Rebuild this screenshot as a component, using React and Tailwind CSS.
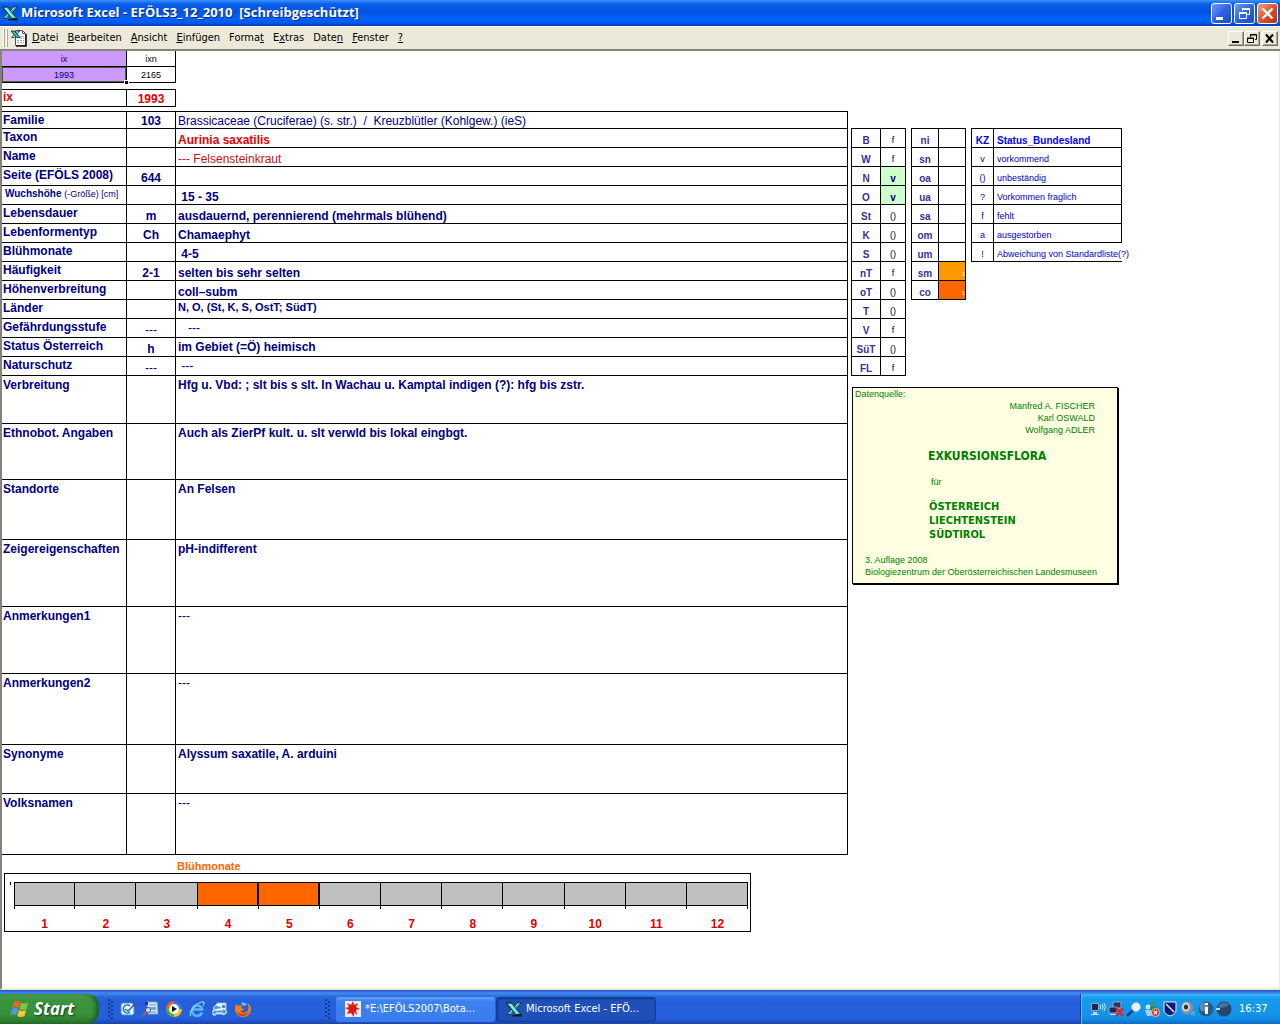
import React from "react";

const menuItems = [
  ["", "D", "atei"],
  ["", "B", "earbeiten"],
  ["", "A", "nsicht"],
  ["", "E", "infügen"],
  ["Forma", "t", ""],
  ["E", "x", "tras"],
  ["Date", "n", ""],
  ["", "F", "enster"],
  ["", "?", ""],
];

// h: row height class, cls: weight, colour and alignment of the value cell
const shortRows = [
  { label: "Familie", code: "103", value: "Brassicaceae (Cruciferae) (s. str.)  /  Kreuzblütler (Kohlgew.) (ieS)", h: "h-[17px]", cls: "font-normal align-bottom" },
  { label: "Taxon", value: "Aurinia saxatilis", cls: "font-bold text-[#e80000] align-bottom" },
  { label: "Name", value: "--- Felsensteinkraut", cls: "font-normal text-[#c81010] align-bottom" },
  { label: "Seite (EFÖLS 2008)", code: "644", value: "" },
  { label: "Wuchshöhe", unit: "(-Größe) [cm]", value: " 15 - 35" },
  { label: "Lebensdauer", code: "m", value: "ausdauernd, perennierend (mehrmals blühend)" },
  { label: "Lebenformentyp", code: "Ch", value: "Chamaephyt" },
  { label: "Blühmonate", value: " 4-5" },
  { label: "Häufigkeit", code: "2-1", value: "selten bis sehr selten" },
  { label: "Höhenverbreitung", value: "coll–subm" },
  { label: "Länder", value: "N, O, (St, K, S, OstT; SüdT)", cls: "font-bold text-[11px] align-top" },
  { label: "Gefährdungsstufe", code: "---", value: "   ---", cls: "font-normal align-middle" },
  { label: "Status Österreich", code: "h", value: "im Gebiet (=Ö) heimisch", cls: "font-bold align-middle" },
  { label: "Naturschutz", code: "---", value: " ---", cls: "font-normal align-middle" },
];

const longRows = [
  { label: "Verbreitung", value: "Hfg u. Vbd: ; slt bis s slt. In Wachau u. Kamptal indigen (?): hfg bis zstr.", h: "h-[48px]" },
  { label: "Ethnobot. Angaben", value: "Auch als ZierPf kult. u. slt verwld bis lokal eingbgt.", h: "h-[56px]" },
  { label: "Standorte", value: "An Felsen", h: "h-[60px]" },
  { label: "Zeigereigenschaften", value: "pH-indifferent", h: "h-[67px]" },
  { label: "Anmerkungen1", value: "---", h: "h-[67px]" },
  { label: "Anmerkungen2", value: "---", h: "h-[71px]" },
  { label: "Synonyme", value: "Alyssum saxatile, A. arduini", h: "h-[49px]" },
  { label: "Volksnamen", value: "---", h: "h-[61px]" },
];

const laender = [
  ["B", "f"], ["W", "f"], ["N", "v"], ["O", "v"], ["St", "()"], ["K", "()"], ["S", "()"],
  ["nT", "f"], ["oT", "()"], ["T", "()"], ["V", "f"], ["SüT", "()"], ["FL", "f"],
];

const stufen = [
  ["ni", ""], ["sn", ""], ["oa", ""], ["ua", ""], ["sa", ""], ["om", ""], ["um", ""],
  ["sm", "bg-[#ff9900]"], ["co", "bg-[#ff6600]"],
];

const legende = [
  ["v", "vorkommend"],
  ["()", "unbeständig"],
  ["?", "Vorkommen fraglich"],
  ["f", "fehlt"],
  ["a", "ausgestorben"],
  ["!", "Abweichung von Standardliste(?)"],
];

const months = [1, 2, 3, 4, 5, 6, 7, 8, 9, 10, 11, 12];

function ExcelIcon() {
  return (
    <svg width="16" height="16" viewBox="0 0 16 16" className="shrink-0">
      <path d="M11.500 2H15L5 13.500H1z" fill="#bff4f4" stroke="#062020" strokeWidth=".8" />
      <path d="M12 3.500h1.500L4.500 13H3z" fill="#1f9c9c" />
      <path d="M.5 2H6l9 11.500H9.500z" fill="#35cfcf" stroke="#062020" />
      <path d="M2.500 3h2l8 10h-1z" fill="#a8fafa" />
      <path d="M6 14h10v1.500H6z" fill="#062020" />
    </svg>
  );
}

function DocIcon() {
  return (
    <svg width="16" height="18" viewBox="0 0 16 18" className="shrink-0">
      <path d="M4.500 1.500h7l3 3v12h-10z" fill="#fff" stroke="#555" />
      <path d="M11.500 1.500v3h3" fill="none" stroke="#555" />
      <path d="M15 5v12H5" fill="none" stroke="#111" strokeWidth="1.600" />
      <path d="M9 7.500h4M9 9.500h4M6 11.500h7M6 13.500h7" stroke="#9aa2ac" strokeDasharray="2 1" />
      <path d="M6.500 2H9L3.500 8.500H.5z" fill="#9beeee" stroke="#062020" strokeWidth=".7" />
      <path d="M0 2h3.500l5.500 6.500H5.500z" fill="#2cc4c4" stroke="#062020" strokeWidth=".8" />
    </svg>
  );
}

function MinGlyph() {
  return (
    <svg width="19" height="19" viewBox="0 0 19 19">
      <path d="M4 13h7v3H4z" fill="#fff" />
    </svg>
  );
}

function RestoreGlyph() {
  return (
    <svg width="19" height="19" viewBox="0 0 19 19" fill="none" stroke="#fff">
      <path d="M7.500 7V4.500h7v6H12" />
      <path d="M7 5h8" strokeWidth="2" />
      <path d="M4.500 8.500h7v6h-7z" />
      <path d="M4 9h8" strokeWidth="2" />
    </svg>
  );
}

function CloseGlyph() {
  return (
    <svg width="19" height="19" viewBox="0 0 19 19" stroke="#fff" strokeWidth="2.400">
      <path d="M4.500 4.500l10 10M14.500 4.500l-10 10" />
    </svg>
  );
}

function TitleBar() {
  const blue =
    "flex h-[21px] w-[21px] items-center justify-center rounded-[3px] border border-white bg-gradient-to-br from-[#6f9bf5] via-[#2f63e6] to-[#1c49c9]";
  return (
    <header className="flex h-[26px] items-center bg-[linear-gradient(#3a93ff_0,#0a5ee8_4px,#0054e0_12px,#0162fb_19px,#0058ee_23px,#0038b4_26px)] pl-[2px] pr-[2px]">
      <ExcelIcon />
      <h1 className="ml-[3px] whitespace-pre font-['Open_Sans',sans-serif] text-[13px] font-bold text-white [text-shadow:1px_1px_#0a2a80]">
        {"Microsoft Excel - EFÖLS3_12_2010  [Schreibgeschützt]"}
      </h1>
      <div className="ml-auto flex gap-[2px]">
        <button aria-label="Minimieren" className={blue}><MinGlyph /></button>
        <button aria-label="Wiederherstellen" className={blue}><RestoreGlyph /></button>
        <button
          aria-label="Schließen"
          className="flex h-[21px] w-[21px] items-center justify-center rounded-[3px] border border-white bg-gradient-to-br from-[#f0a088] via-[#e0502c] to-[#b8300c]"
        >
          <CloseGlyph />
        </button>
      </div>
    </header>
  );
}

function MenuBar() {
  const small =
    "flex h-[15px] w-4 items-center justify-center border border-t-white border-l-white border-r-[#716f64] border-b-[#716f64] bg-[#ece9d8] shadow-[inset_-1px_-1px_#aca899]";
  return (
    <nav className="flex h-[25px] items-center border-b-2 border-[#86847a] border-t border-t-white bg-[#ece9d8] pr-[2px] font-['DejaVu_Sans_Condensed','DejaVu_Sans',sans-serif] text-[11px] text-black">
      <span className="ml-[3px] h-[18px] w-[2px] border-l border-white bg-[#aca899]" />
      <span className="ml-px mr-[3px] h-[18px] w-[2px] border-l border-white bg-[#aca899]" />
      <DocIcon />
      <div className="ml-[5px] flex gap-[9px]">
        {menuItems.map(([a, u, b]) => (
          <button key={a + u + b} className="leading-4">
            {a}<u>{u}</u>{b}
          </button>
        ))}
      </div>
      <div className="ml-auto flex">
        <button aria-label="Fenster minimieren" className={small}>
          <svg width="12" height="11"><path d="M2 8h7v2H2z" /></svg>
        </button>
        <button aria-label="Fenster wiederherstellen" className={small}>
          <svg width="12" height="11" fill="none" stroke="#000">
            <path d="M4.500 4V1.500h6v5H9M4 2h7" />
            <path d="M1.500 5.500h6v4h-6zM1 5h7" />
          </svg>
        </button>
        <button aria-label="Fenster schließen" className={small + " ml-[2px]"}>
          <svg width="12" height="11" stroke="#000" strokeWidth="2"><path d="M2 1.500l7 8M9 1.500l-7 8" /></svg>
        </button>
      </div>
    </nav>
  );
}

function IndexTables() {
  return (
    <>
      <table className="w-[174px] table-fixed border-separate border-spacing-0 text-center text-[9px] leading-3">
        <colgroup>
          <col className="w-[125px]" />
          <col className="w-[49px]" />
        </colgroup>
        <tbody>
          <tr className="h-4">
            <td className="border-b border-r border-black bg-[#cc99ff] p-0 text-[#000080]">ix</td>
            <td className="border-b border-r border-black p-0">ixn</td>
          </tr>
          <tr className="h-4">
            <td className="relative border-b border-r border-black bg-[#cc99ff] p-0 text-[#000080] shadow-[inset_0_0_0_1px_#4a5a3a]">
              1993
              <span className="absolute -bottom-[3px] -right-[3px] h-[5px] w-[5px] border border-white bg-black" />
            </td>
            <td className="border-b border-r border-black p-0">2165</td>
          </tr>
        </tbody>
      </table>
      <table className="mt-[6px] w-[174px] table-fixed border-separate border-spacing-0 border-t border-black text-[12px] font-bold leading-[14px] text-[#e80000]">
        <colgroup>
          <col className="w-[125px]" />
          <col className="w-[49px]" />
        </colgroup>
        <tbody>
          <tr className="h-[17px]">
            <td className="border-b border-r border-black p-0 pl-px align-top">ix</td>
            <td className="border-b border-r border-black p-0 text-center align-bottom">1993</td>
          </tr>
        </tbody>
      </table>
    </>
  );
}

function TaxonTable() {
  return (
    <table className="mt-1 w-[846px] table-fixed border-separate border-spacing-0 whitespace-pre border-t border-black text-[12px] leading-[14px] text-[#000080]">
      <colgroup>
        <col className="w-[125px]" />
        <col className="w-[49px]" />
        <col />
      </colgroup>
      <tbody>
        {shortRows.map((r) => (
          <tr key={r.label} className={r.h || "h-[19px]"}>
            {r.unit ? (
              <th className="border-b border-r border-black p-0 pl-[3px] pt-px text-left align-top text-[10px] font-bold">
                {r.label} <span className="text-[9px] font-normal">{r.unit}</span>
              </th>
            ) : (
              <th className="border-b border-r border-black p-0 pl-px pt-px text-left align-top font-bold">{r.label}</th>
            )}
            <td className={"border-b border-r border-black p-0 text-center align-bottom " + (r.code === "---" ? "font-normal" : "font-bold")}>
              {r.code}
            </td>
            <td className={"border-b border-r border-black p-0 pl-[2px] " + (r.cls || "font-bold align-bottom")}>{r.value}</td>
          </tr>
        ))}
        {longRows.map((r) => (
          <tr key={r.label} className={r.h}>
            <th className="border-b border-r border-black p-0 pl-px pt-[2px] text-left align-top font-bold">{r.label}</th>
            <td className="border-b border-r border-black p-0" />
            <td className={"border-b border-r border-black p-0 pl-[2px] pt-[2px] align-top " + (r.value === "---" ? "font-normal" : "font-bold")}>
              {r.value}
            </td>
          </tr>
        ))}
      </tbody>
    </table>
  );
}

function BloomChart() {
  return (
    <section className="w-[749px]">
      <h2 className="ml-[175px] mt-1 text-[11px] font-bold leading-[14px] text-[#ff6600]">Blühmonate</h2>
      <div className="ml-[2px] flex h-[59px] border border-black pl-[5px] pr-[2px] pt-[8px]">
        <span className="h-[3px] w-px bg-black" />
        <div className="ml-[3px] flex grow">
          {months.map((m) => (
            <div key={m} className="group flex-1 text-center text-[12px] font-bold leading-[14px] text-[#e00000]">
              <div
                className={
                  "h-6 border-b border-t border-black group-first:border-l " +
                  (m === 4 || m === 5 ? "border-r-2 bg-[#ff6600]" : "border-r bg-[#c0c0c0]")
                }
              />
              <div className="mb-2 h-[3px] border-r border-black group-first:border-l" />
              {m}
            </div>
          ))}
        </div>
      </div>
    </section>
  );
}

function SideTables() {
  return (
    <div className="flex items-start gap-[5px] text-[9px] leading-[13px]">
      <table className="w-[55px] table-fixed border-separate border-spacing-0 border-l border-t border-black text-center">
        <colgroup>
          <col className="w-[29px]" />
          <col className="w-[25px]" />
        </colgroup>
        <tbody>
          {laender.map(([k, s]) => (
            <tr key={k} className="h-[19px]">
              <th className="border-b border-r border-black p-0 align-bottom text-[10px] font-bold text-[#333399]">{k}</th>
              <td
                className={
                  "border-b border-r border-black p-0 align-bottom " +
                  (s === "v" ? "bg-[#ccffcc] text-[10px] font-bold text-[#000080]" : "")
                }
              >
                {s}
              </td>
            </tr>
          ))}
        </tbody>
      </table>
      <table className="w-[55px] table-fixed border-separate border-spacing-0 border-l border-t border-black text-center">
        <colgroup>
          <col className="w-[27px]" />
          <col className="w-[27px]" />
        </colgroup>
        <tbody>
          {stufen.map(([k, bg]) => (
            <tr key={k} className="h-[19px]">
              <th className="border-b border-r border-black p-0 align-bottom text-[10px] font-bold text-[#333399]">{k}</th>
              <td className={"border-b border-r border-black p-0 text-right align-bottom text-[6px] leading-[11px] text-white " + bg}>
                {bg ? "1" : ""}
              </td>
            </tr>
          ))}
        </tbody>
      </table>
      <table className="w-[151px] table-fixed border-separate border-spacing-0 whitespace-nowrap border-l border-t border-black text-left text-[#0000c8]">
        <colgroup>
          <col className="w-[22px]" />
          <col className="w-[128px]" />
        </colgroup>
        <thead>
          <tr className="h-[19px] text-[10px] text-[#0000ff]">
            <th className="border-b border-r border-black p-0 text-center align-bottom">KZ</th>
            <th className="border-b border-r border-black p-0 pl-[3px] align-bottom">Status_Bundesland</th>
          </tr>
        </thead>
        <tbody>
          {legende.map(([k, t]) => (
            <tr key={k} className="h-[19px]">
              <td className="border-b border-r border-black p-0 text-center align-bottom">{k}</td>
              <td className={"border-b border-black p-0 pl-[3px] align-bottom " + (k === "!" ? "" : "border-r")}>{t}</td>
            </tr>
          ))}
        </tbody>
      </table>
    </div>
  );
}

function SourceBox() {
  return (
    <aside className="ml-px mt-[11px] h-[197px] w-[266px] border border-black bg-[#ffffe1] text-[9px] leading-3 text-[#008000] shadow-[1px_1px_#000]">
      <p className="pl-[2px]">Datenquelle:</p>
      <div className="pr-[22px] text-right">
        <p>Manfred A. FISCHER</p>
        <p>Karl OSWALD</p>
        <p>Wolfgang ADLER</p>
      </div>
      <div className="pl-[75px] font-['DejaVu_Sans_Condensed','DejaVu_Sans',sans-serif] font-bold">
        <p className="mt-3 text-[12px] leading-4">EXKURSIONSFLORA</p>
        <p className="my-3 pl-[3px] font-['Liberation_Sans',sans-serif] font-normal">für</p>
        <p className="pl-px text-[11px] leading-[14px]">ÖSTERREICH</p>
        <p className="pl-px text-[11px] leading-[14px]">LIECHTENSTEIN</p>
        <p className="pl-px text-[11px] leading-[14px]">SÜDTIROL</p>
      </div>
      <div className="mt-3 whitespace-nowrap pl-3">
        <p>3. Auflage 2008</p>
        <p>Biologiezentrum der Oberösterreichischen Landesmuseen</p>
      </div>
    </aside>
  );
}

function Grip() {
  return (
    <svg width="6" height="20" viewBox="0 0 6 20" fill="#123a9c" className="shrink-0">
      {[0, 4, 8, 12, 16].map((y) => (
        <g key={y}>
          <rect x="0" y={y} width="2" height="2" />
          <rect x="3" y={y + 2} width="2" height="2" />
        </g>
      ))}
    </svg>
  );
}

function QuickLaunch() {
  return (
    <div className="flex gap-[7px]">
      <a href="#desktop" aria-label="Desktop anzeigen">
        <svg width="16" height="16">
          <rect x="1" y="2" width="13" height="12" rx="2" fill="#e8f4ff" stroke="#3f8fd8" />
          <path d="M10 5a4 4 0 1 0 0 6M5 8l3 2 6-6" fill="none" stroke="#1f6fc0" strokeWidth="1.500" />
          <path d="M13 3l2 2" stroke="#b03020" strokeWidth="2" />
        </svg>
      </a>
      <a href="#suche" aria-label="Suche">
        <svg width="16" height="16">
          <path d="M4 1h10l1 12H5z" fill="#dcebf8" stroke="#7fa6cc" />
          <path d="M6 4h7M6 11h7" stroke="#88a" />
          <path d="M6 6h7v3H6z" fill="#6aa8e8" />
          <circle cx="5" cy="9" r="2.500" fill="#cfe8ff" stroke="#556" />
          <path d="M3 11l-3 4" stroke="#c0603a" strokeWidth="2" />
          <path d="M2 1h3v3H2z" fill="#1a2fa8" />
        </svg>
      </a>
      <a href="#player" aria-label="Media Player">
        <svg width="16" height="16">
          <path d="M8 8V0A8 8 0 0 0 0 8z" fill="#e8622a" />
          <path d="M8 8h8A8 8 0 0 0 8 0z" fill="#2f78d8" />
          <path d="M8 8H0a8 8 0 0 0 8 8z" fill="#4caf3c" />
          <path d="M8 8v8a8 8 0 0 0 8-8z" fill="#f3c423" />
          <circle cx="8" cy="8" r="5" fill="#f8f8f8" />
          <path d="M6 5l5 3-5 3z" fill="#111" />
        </svg>
      </a>
      <a href="#ie" aria-label="Internet Explorer">
        <svg width="16" height="16" fill="none">
          <path d="M13 11.500A5.200 5.200 0 1 1 13.200 8.500H4" stroke="#56b8f5" strokeWidth="2.600" />
          <path d="M2 15C-1 13 5 3 13 1c3-.5 2 2 1 4" stroke="#8fd4ff" strokeWidth="1.200" />
        </svg>
      </a>
      <a href="#mail" aria-label="Outlook Express">
        <svg width="16" height="16">
          <path d="M5 2h9v11H5z" fill="#f2f6fc" stroke="#9db4d4" />
          <path d="M10 4h3v3h-3z" fill="#4a86d8" />
          <path d="M1 7l4-4v2h4v3H5v2zM15 11l-4-4v2H1v5h3v-2h7v2z" fill="#3f98e6" stroke="#e6f3ff" />
        </svg>
      </a>
      <a href="#firefox" aria-label="Firefox">
        <svg width="17" height="16">
          <circle cx="8" cy="8" r="6" fill="#2a5fc0" />
          <path d="M6 2c3-1 5 0 6 2L8 5z" fill="#7fb4ee" />
          <path d="M1 3l2 2c1-1 3-1 4 0L6 7l3 1c-1 2-3 2-4 2 2 3 7 2 8-1s0-5-1-7c4 2 5 6 3 10s-7 5-11 3S-1 7 1 3z" fill="#f08019" />
          <path d="M2 10c3 4 9 4 12 0-1 4-4 5.500-7 5S2 13 2 10z" fill="#d0401a" />
        </svg>
      </a>
    </div>
  );
}

function TrayIcons() {
  return (
    <div className="flex gap-[2px]">
      <svg width="16" height="16">
        <path d="M1.500 2.500h7v7h-7z" fill="#1c2550" stroke="#8fa4c0" />
        <path d="M3 11h4v2H3zM1 13h8v1H1z" fill="#cdd6e0" />
        <path d="M10 4q1.500 2 0 4M12 3q2.500 3 0 6M14 2q3 4 0 8" fill="none" stroke="#cfe6ff" />
      </svg>
      <svg width="16" height="16">
        <path d="M5 1h8v6H5z" fill="#26306a" stroke="#9ab" />
        <path d="M1 6h8v6H1z" fill="#1c2550" stroke="#9ab" />
        <path d="M2 13h7v1H2z" fill="#cdd6e0" />
        <path d="M8 7l7 8M15 7l-7 8" stroke="#e0252c" strokeWidth="2.500" />
      </svg>
      <svg width="16" height="16">
        <path d="M7 9l-6 6" stroke="#223a78" strokeWidth="2.500" />
        <circle cx="10" cy="6" r="4.500" fill="#e6f5ff" stroke="#8fbce6" />
      </svg>
      <svg width="16" height="16">
        <circle cx="9" cy="3" r="2.500" fill="#3d9a5a" />
        <circle cx="4" cy="6" r="2.500" fill="#bfe6ec" />
        <path d="M6 6h6l2 4-4 4H6z" fill="#2a7f50" />
        <path d="M1 9h6l2 4-2 2H3z" fill="#9fd2dc" />
        <circle cx="11.500" cy="11.500" r="4" fill="#d8321c" stroke="#fff" strokeWidth=".6" />
        <path d="M10 10l3 3M13 10l-3 3" stroke="#fff" strokeWidth="1.300" />
      </svg>
      <svg width="16" height="16">
        <path d="M2 1h12v8c0 3-3 5-6 6-3-1-6-3-6-6z" fill="#0c1c78" stroke="#e8ecf8" />
        <path d="M4 3l8 8" stroke="#e8ecf8" strokeWidth="1.500" />
      </svg>
      <svg width="16" height="16">
        <ellipse cx="7" cy="7" rx="6" ry="6.500" fill="#8c9096" />
        <ellipse cx="6" cy="6" rx="4" ry="4.500" fill="#d4d7da" />
        <ellipse cx="6" cy="6" rx="2.200" ry="2.500" fill="#303438" />
        <path d="M11 14l3-4M13 15l2-3" stroke="#8fc2ff" />
      </svg>
      <svg width="16" height="16">
        <circle cx="8" cy="8" r="7.500" fill="#2c5884" />
        <circle cx="6" cy="6" r="4.500" fill="#5c8cb8" />
        <path d="M7 2h3v2H7zM7 6h3v7H7z" fill="#fff" />
      </svg>
      <svg width="16" height="16">
        <circle cx="8" cy="8" r="7.500" fill="#23476e" />
        <path d="M2 5q5-6 11-2-3 4-10 4z" fill="#4d7298" />
        <path d="M0 7h4v2H0z" fill="#c6dcf0" />
      </svg>
    </div>
  );
}

function Taskbar() {
  return (
    <footer className="flex h-[34px] items-stretch bg-[linear-gradient(#1f4fb8_0,#3f8cf0_3px,#2a66dc_7px,#245edb_12px,#2560dd_28px,#1a45b0_34px)] font-['DejaVu_Sans_Condensed','DejaVu_Sans',sans-serif] text-[11px] text-white">
      <button className="mt-1 flex w-[99px] items-center rounded-r-xl bg-[linear-gradient(#5fae5c_0,#3c9440_5px,#37913a_20px,#2a742c_30px)] pl-[10px] shadow-[inset_-3px_0_4px_#1d5c22]">
        <svg width="20" height="18" viewBox="0 0 20 18">
          <path d="M4 2q3-2 6 0L8.500 8q-3-2-6 0z" fill="#f0652a" />
          <path d="M11 2.500q3 2 7 0L16.500 9q-4 2-7 0z" fill="#86c440" />
          <path d="M2 9q3-2 6 0l-1.500 6q-3-2-6 0z" fill="#5a94f0" />
          <path d="M9 10q3 2 7 0l-1.500 6q-4 2-7 0z" fill="#f8c832" />
        </svg>
        <span className="ml-1 font-['Open_Sans',sans-serif] text-[17px] font-bold italic leading-5 [text-shadow:1px_1px_2px_#143a14]">Start</span>
      </button>
      <div className="ml-[9px] flex items-center gap-[6px] pt-1">
        <Grip />
        <QuickLaunch />
      </div>
      <div className="ml-[73px] flex items-center pt-1">
        <Grip />
        <button className="ml-[5px] flex h-[25px] w-[159px] items-center gap-1 rounded-[3px] bg-[linear-gradient(#6aa4fa,#3c81f0_4px,#3a7def)] pl-[9px]">
          <svg width="16" height="16" className="shrink-0">
            <path d="M0 0h16v16H0z" fill="#f4e8e8" />
            <path d="M8 0l1 4 4-2-2 4 4 2-4 1 1 5-3-3 0 5-3-4-4 1 2-4-4-2 4-1-2-4 4 2z" fill="#e01818" />
          </svg>
          *E:\EFÖLS2007\Bota...
        </button>
        <button className="ml-px flex h-[25px] w-[160px] items-center gap-1 rounded-[3px] border border-[#143c96] bg-[#1e50b8] pl-[9px] shadow-[inset_1px_1px_2px_#123a8c]">
          <ExcelIcon />
          Microsoft Excel - EFÖ...
        </button>
      </div>
      <div className="ml-auto mt-1 flex w-[200px] items-center gap-[7px] border-l border-[#0b3fa8] bg-[linear-gradient(#3cbcf6_0,#159cee_4px,#1290e8_24px,#0d6cc8_30px)] pl-[9px] shadow-[inset_1px_0_#4fc8ff]">
        <TrayIcons />
        <time>16:37</time>
      </div>
    </footer>
  );
}

export default function App() {
  return (
    <div className="flex min-h-screen flex-col bg-white font-['Liberation_Sans',Arial,sans-serif] text-black">
      <TitleBar />
      <MenuBar />
      <main className="flex grow items-start border-b-2 border-l-2 border-r border-b-[#ece9d8] border-l-[#86847a] border-r-[#ece9d8]">
        <div className="shrink-0">
          <IndexTables />
          <TaxonTable />
          <BloomChart />
        </div>
        <div className="ml-[3px] mt-[77px] shrink-0">
          <SideTables />
          <SourceBox />
        </div>
      </main>
      <Taskbar />
    </div>
  );
}
